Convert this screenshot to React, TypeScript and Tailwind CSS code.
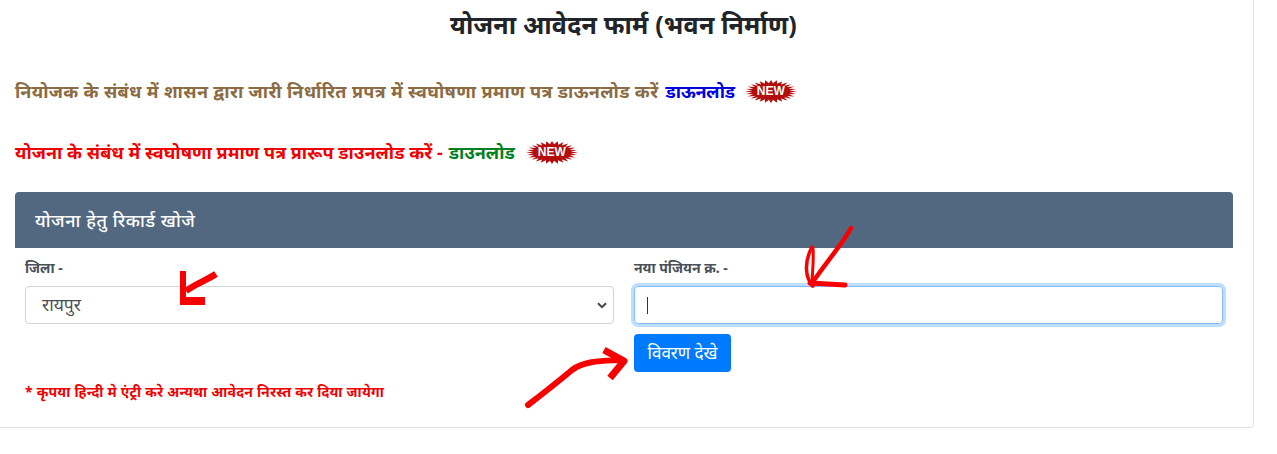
import React from "react";

const Burst = () => {
  const pts: string[] = [];
  const n = 28;
  for (let i = 0; i < n * 2; i++) {
    const a = (i * Math.PI) / n;
    const r = i % 2 === 0 ? 1 : 0.72;
    pts.push(`${26 + 26 * r * Math.cos(a)},${11.5 + 11.5 * r * Math.sin(a)}`);
  }
  return (
    <span className="relative inline-flex w-[52px] h-[23px] items-center justify-center">
      <svg className="absolute inset-0" width="52" height="23" viewBox="0 0 52 23">
        <polygon points={pts.join(" ")} fill="#b30d0d" />
      </svg>
      <span className="relative text-white text-[12px] font-bold leading-none" style={{ fontFamily: '"Liberation Sans", sans-serif' }}>NEW</span>
    </span>
  );
};

export default function App() {
  return (
    <div className="relative w-[1277px] h-[454px] bg-white overflow-hidden text-[#212529]" style={{ fontFamily: '"Noto Sans", "Noto Sans Devanagari", "Liberation Sans", sans-serif' }}>
      <div className="w-[1254px] h-[428px] border-r border-b border-[#e2e2e2] rounded-br-[4px] px-[15px]">
        <h1 className="h-[48px] flex items-center justify-center text-[25px] font-bold leading-none text-[#212529] ml-[-6px] tracking-[0.2px]">योजना आवेदन फार्म (भवन निर्माण)</h1>

        <div className="h-[26px] mt-[30px] flex items-center text-[18px] font-bold leading-none text-[#8b6b43] whitespace-nowrap">
          <span className="tracking-[0.35px]">नियोजक के संबंध में शासन द्वारा जारी निर्धारित प्रपत्र में स्वघोषणा प्रमाण पत्र डाऊनलोड करें</span>
          <span className="ml-[7px] text-[#0000e0] tracking-[-0.2px]">डाऊनलोड</span>
          <span className="ml-[10px] flex"><Burst /></span>
        </div>

        <div className="h-[26px] mt-[35px] flex items-center text-[18px] font-bold leading-none text-[#f00000] whitespace-nowrap">
          <span className="tracking-[0.05px]">योजना के संबंध में स्वघोषणा प्रमाण पत्र प्रारूप डाउनलोड करें -</span>
          <span className="ml-[6px] text-[#008020]">डाउनलोड</span>
          <span className="ml-[11px] flex"><Burst /></span>
        </div>

        <div className="mt-[27px] w-[1218px]">
          <div className="h-[56px] rounded-t-[4px] bg-[#526880] text-white text-[18px] font-medium tracking-[0.55px] flex items-center px-[20px]">योजना हेतु रिकार्ड खोजे</div>
          <div className="px-[10px] grid grid-cols-2 gap-x-[20px]">
            <div>
              <div className="h-[38px] flex items-end pb-[11px] text-[14px] font-bold leading-none text-[#495057]">जिला -</div>
              <div className="h-[38px] border border-[#ced4da] rounded-[4px] flex items-center justify-between pl-[16px] pr-[6px] text-[17.5px] text-[#495057]">
                <span className="pb-[2px]">रायपुर</span>
                <svg width="10" height="7" viewBox="0 0 10 7" fill="none"><path d="M1 1.2 5 5.2 9 1.2" stroke="#444" strokeWidth="2" /></svg>
              </div>
            </div>
            <div>
              <div className="h-[38px] flex items-end pb-[11px] text-[14px] font-bold leading-none text-[#495057]">नया पंजियन क्र. -</div>
              <div className="h-[38px] border border-[#80bdff] rounded-[4px] shadow-[0_0_0_3px_rgba(0,123,255,0.25)] flex items-center pl-[12px]">
                <span className="w-px h-[17px] bg-[#333]" />
              </div>
              <button className="mt-[10px] h-[38px] w-[97px] bg-[#007bff] rounded-[4px] text-white text-[17px] flex items-center justify-center">विवरण देखे</button>
            </div>
          </div>
          <div className="ml-[10px] mt-[13px] text-[14px] font-bold leading-none text-[#f00000] tracking-[0.22px]">* कृपया हिन्दी मे एंट्री करे अन्यथा आवेदन निरस्त कर दिया जायेगा</div>
        </div>
      </div>

      <svg className="absolute left-0 top-0 pointer-events-none" width="1277" height="454" viewBox="0 0 1277 454" fill="none" stroke="#f80000" strokeLinejoin="round">
        <path d="M183 271 183 305" strokeWidth="6" />
        <path d="M180 301 205 301" strokeWidth="8" />
        <path d="M186 291C195 284 205 281 216 274" strokeWidth="6.5" />
        <path d="M851 228C845 240 832 255 812 283" strokeWidth="4.5" strokeLinecap="round" />
        <path d="M812 247C804 262 805 278 813 286" strokeWidth="3.5" strokeLinecap="round" />
        <path d="M813 248C814 262 812 274 812 286" strokeWidth="3" strokeLinecap="round" />
        <path d="M810 283 845 285" strokeWidth="5" strokeLinecap="round" />
        <path d="M528 405C545 392 560 380 572 370 585 360 605 361 622 360" strokeWidth="6" strokeLinecap="round" />
        <path d="M604 350 624 361 610 378" strokeWidth="7" />
      </svg>
    </div>
  );
}
